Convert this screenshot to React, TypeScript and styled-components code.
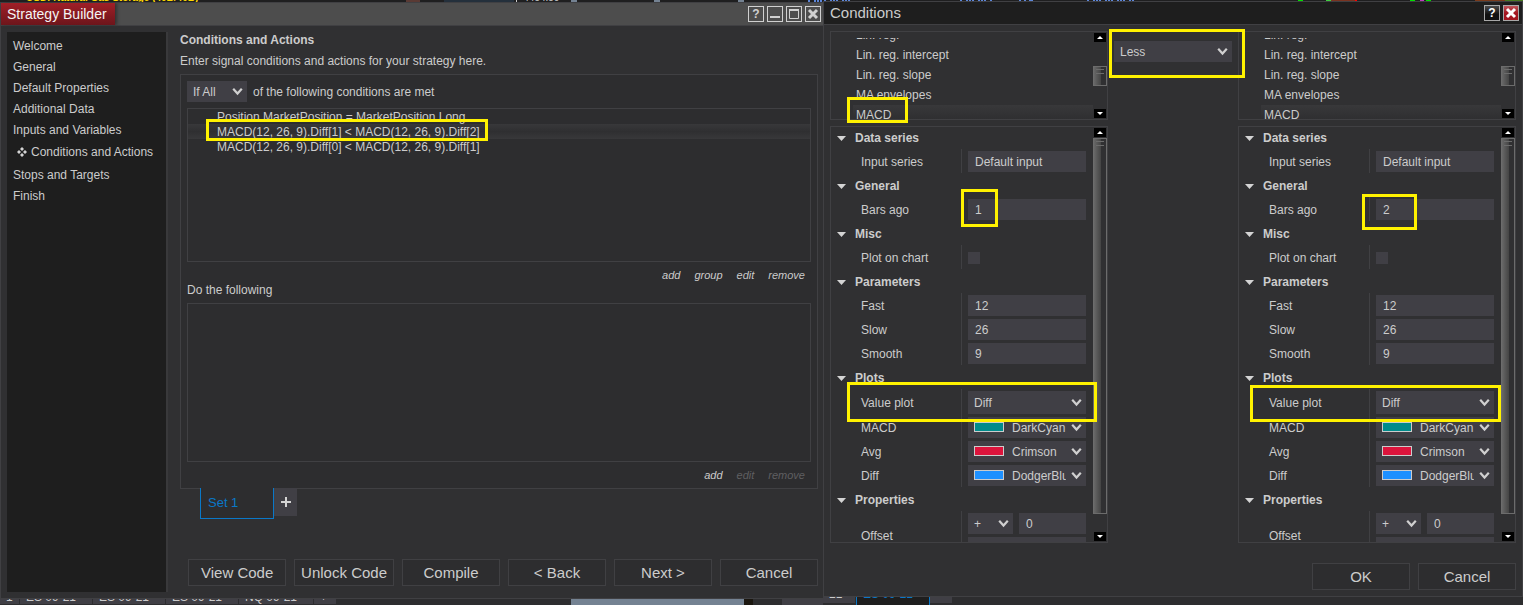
import React, { useId } from "react";
import styled, { createGlobalStyle, css } from "styled-components";

const c = {
  window: "#303032",
  panel: "#2d2d2f",
  dark: "#1e1e1e",
  line: "#404043",
  field: "#403f45",
  text: "#cccccc",
  dim: "#5f5f61",
  blue: "#0a78c8",
  mark: "#fff200",
};

const GlobalStyle = createGlobalStyle`
  *, *::before, *::after { box-sizing: border-box; }
  body {
    margin: 0;
    background: ${c.panel};
    color: ${c.text};
    font: 12px/14px "Liberation Sans", Arial, sans-serif;
  }
  button, input, select { font: inherit; color: inherit; margin: 0; border-radius: 0; }
  h1, h2, h3, p, ul { margin: 0; padding: 0; font: inherit; list-style: none; }
`;

const Desktop = styled.main`
  display: flex;
  min-height: 100vh;
`;

const Column = styled.div<{ $grow: number }>`
  display: flex;
  flex-direction: column;
  flex: ${(p) => p.$grow} 1 0;
  min-width: 0;
`;

const TopStrip = styled.div<{ $height: number }>`
  position: relative;
  display: flex;
  align-items: flex-end;
  height: ${(p) => p.$height}px;
  overflow: hidden;
  background: #1f1f20;
  line-height: 8px;
  font-size: 10px;
`;

const StripArt = styled.svg`
  position: absolute;
  inset: 0;
  width: 100%;
  height: 100%;
`;

const Headline = styled.span`
  margin-left: 26px;
  font-weight: bold;
  color: #ffd800;
  white-space: nowrap;
`;

const Quote = styled.span`
  margin-left: 325px;
`;

const BottomStrip = styled.div<{ $height: number }>`
  position: relative;
  display: flex;
  height: ${(p) => p.$height}px;
  overflow: hidden;
  background: ${c.panel};
`;

const ChartTab = styled.span<{ $width: number; $active?: boolean; $raised?: boolean }>`
  display: flex;
  align-items: flex-end;
  width: ${(p) => p.$width}px;
  height: 5px;
  padding: 0 0 0 6px;
  background: ${c.field};
  border-right: 1px solid ${c.panel};
  white-space: nowrap;
  ${(p) =>
    p.$raised &&
    css`
      height: 6px;
      padding-bottom: 2px;
    `}
  ${(p) =>
    p.$active &&
    css`
      height: 8px;
      padding-bottom: 4px;
      background: ${c.dark};
      color: ${c.blue};
      border: 0 solid ${c.blue};
      border-width: 0 1px;
    `}
`;

const Filler = styled.span<{ $width: number; $color?: string }>`
  width: ${(p) => p.$width}px;
  background: ${(p) => p.$color || "transparent"};
`;

const Window = styled.section<{ $dialog?: boolean }>`
  display: flex;
  flex-direction: column;
  flex: 1;
  border: 1px solid ${c.line};
  border-right-width: ${(p) => (p.$dialog ? 1 : 0)}px;
  background: ${c.window};
`;

const TitleBar = styled.header<{ $dialog?: boolean }>`
  display: flex;
  align-items: center;
  justify-content: space-between;
  height: 23px;
  padding-right: ${(p) => (p.$dialog ? 3 : 2)}px;
  border-bottom: 1px solid ${c.line};
  background: ${(p) => (p.$dialog ? c.dark : "#4d4d4d")};
`;

const TitleTag = styled.h1<{ $dialog?: boolean }>`
  padding: 0 8px 0 6px;
  font-size: ${(p) => (p.$dialog ? 15 : 14)}px;
  line-height: 22px;
  color: ${(p) => (p.$dialog ? c.text : "#f4f4f4")};
  ${(p) =>
    !p.$dialog &&
    css`
      background: linear-gradient(#a01f27, #6d151b);
      box-shadow: 2px 0 3px #333;
    `}
`;

const WindowButtons = styled.div`
  display: flex;
  gap: 3px;
`;

const WindowButton = styled.button<{ $tone?: "dark" | "red" }>`
  display: block;
  width: 16px;
  height: 16px;
  padding: 0;
  border: 1px solid ${(p) => (p.$tone ? "#a8a8a8" : "#d0d0d0")};
  background: ${(p) =>
    p.$tone === "red"
      ? "linear-gradient(#c0555b, #a3161f 50%)"
      : p.$tone === "dark"
        ? "linear-gradient(#4a4a4a, #111 60%)"
        : "transparent"};
  color: ${(p) => (p.$tone ? "#fff" : "#d0d0d0")};
  font-weight: bold;
  line-height: 14px;
  svg { display: block; }
`;

const BuilderBody = styled.div`
  display: flex;
  flex: 1;
  padding: 6px 5px 6px 6px;
`;

const Sidebar = styled.nav`
  width: 161px;
  padding: 3px 6px;
  background: ${c.dark};
  border-right: 2px solid #39393b;
`;

const Step = styled.a<{ $active?: boolean }>`
  display: flex;
  align-items: center;
  gap: 4px;
  height: ${(p) => (p.$active ? 24 : 21)}px;
  padding-left: ${(p) => (p.$active ? 4 : 0)}px;
  color: inherit;
  text-decoration: none;
  white-space: nowrap;
`;

const Content = styled.div`
  display: flex;
  flex-direction: column;
  flex: 1;
  min-width: 0;
  padding: 0 0 0 12px;
`;

const Heading = styled.h2`
  font-weight: bold;
  line-height: 16px;
`;

const Intro = styled.p`
  margin-top: 5px;
  line-height: 16px;
`;

const GroupBox = styled.div`
  margin-top: 5px;
  padding: 6px 6px 0;
  border: 1px solid ${c.line};
  background: ${c.panel};
`;

const MatchRow = styled.div`
  display: flex;
  align-items: center;
  gap: 6px;
`;

const ListBox = styled.ul<{ $height: number }>`
  position: relative;
  height: ${(p) => p.$height}px;
  border: 1px solid ${c.line};
`;

const ConditionList = styled(ListBox)`
  margin-top: 6px;
`;

const Condition = styled.li<{ $selected?: boolean }>`
  height: 15px;
  padding-left: 29px;
  line-height: 17px;
  background: ${(p) => (p.$selected ? "linear-gradient(#38383a, #2f2f31 50%, #38383a)" : "none")};
`;

const Links = styled.div`
  display: flex;
  justify-content: flex-end;
  gap: 14px;
  height: 26px;
  padding-right: 6px;
`;

const LinkButton = styled.button`
  padding: 0;
  border: 0;
  background: none;
  font-size: 11px;
  font-style: italic;
  &:disabled { color: ${c.dim}; }
`;

const SectionLabel = styled.h3`
  height: 15px;
  line-height: 5px;
`;

const SetTabs = styled.div`
  display: flex;
  align-items: flex-start;
  margin: -1px 0 0 20px;
`;

const SetTab = styled.button`
  width: 74px;
  height: 31px;
  padding: 0 0 0 7px;
  border: 1px solid ${c.blue};
  border-top: 0;
  background: ${c.panel};
  color: ${c.blue};
  font-size: 13px;
  text-align: left;
`;

const AddTab = styled.button`
  display: grid;
  place-items: center;
  width: 23px;
  height: 28px;
  padding: 0;
  border: 0;
  background: ${c.field};
`;

const Footer = styled.footer<{ $dialog?: boolean }>`
  display: flex;
  justify-content: flex-end;
  gap: 8px;
  margin-top: auto;
  padding-bottom: ${(p) => (p.$dialog ? 0 : 6)}px;
`;

const PushButton = styled.button`
  min-width: 98px;
  height: 27px;
  padding: 0 6px;
  border: 1px solid ${c.line};
  background: ${c.panel};
  font-size: 15px;
  white-space: nowrap;
`;

const DialogBody = styled.div`
  display: flex;
  flex-direction: column;
  flex: 1;
  padding: 6px;
`;

const Operands = styled.div`
  display: grid;
  grid-template-columns: 1fr 130px 1fr;
`;

const OperandColumn = styled.div`
  display: flex;
  flex-direction: column;
  gap: 6px;
  min-width: 0;
`;

const OperatorColumn = styled.div`
  position: relative;
  padding: 10px 6px;
`;

const Panel = styled.div<{ $height: number }>`
  position: relative;
  display: flex;
  height: ${(p) => p.$height}px;
  border: 1px solid ${c.line};
`;

const IndicatorClip = styled.ul`
  display: flex;
  flex-direction: column;
  justify-content: flex-end;
  flex: 1;
  margin-top: 6px;
  padding-left: 22px;
  overflow: hidden;
`;

const Indicator = styled.li<{ $selected?: boolean }>`
  flex: none;
  height: ${(p) => (p.$selected ? 14 : 20)}px;
  padding-left: 3px;
  line-height: 20px;
  background: ${(p) => (p.$selected ? "linear-gradient(#38383a, #2f2f31)" : "none")};
`;

const PropertyClip = styled.div`
  display: flex;
  flex-direction: column;
  gap: 2px;
  flex: 1;
  min-width: 0;
  overflow: hidden;
`;

const GroupHeader = styled.h3`
  display: flex;
  align-items: center;
  gap: 9px;
  height: 22px;
  padding-left: 6px;
  font-weight: bold;
`;

const Property = styled.div`
  display: flex;
  align-items: stretch;
`;

const PropertyName = styled.label`
  display: flex;
  align-items: center;
  width: 130px;
  padding: 2px 0 0 30px;
`;

const PropertyValue = styled.div`
  display: flex;
  flex: 1;
  flex-wrap: wrap;
  align-items: center;
  gap: 3px 6px;
  min-width: 0;
  min-height: 24px;
  padding: 2px 7px 1px 6px;
  border-left: 1px solid ${c.line};
`;

const TextField = styled.input`
  flex: 1;
  min-width: 0;
  width: 60px;
  height: 21px;
  padding: 0 7px;
  border: 0;
  background: ${c.field};
`;

const WideField = styled(TextField)`
  flex: 1 0 100%;
`;

const Tick = styled.input`
  appearance: none;
  width: 12px;
  height: 12px;
  margin: 0;
  background: ${c.field};
`;

const SelectWrap = styled.span<{ $width?: number; $tall?: boolean }>`
  position: relative;
  display: flex;
  flex: ${(p) => (p.$width ? "none" : 1)};
  width: ${(p) => (p.$width ? `${p.$width}px` : "auto")};
  min-width: 0;
  height: ${(p) => (p.$tall ? 23 : 21)}px;
  background: ${c.field};
`;

const NativeSelect = styled.select<{ $swatch?: boolean }>`
  appearance: none;
  flex: 1;
  width: 100%;
  min-width: 0;
  padding: 0 ${(p) => (p.$swatch ? 20 : 7)}px 0 ${(p) => (p.$swatch ? 44 : 6)}px;
  border: 0;
  background: transparent;
  option { background: ${c.field}; }
`;

const SelectArrow = styled.svg`
  position: absolute;
  right: 4px;
  top: 50%;
  margin-top: -4px;
  pointer-events: none;
`;

const Swatch = styled.span<{ $color: string }>`
  position: absolute;
  left: 6px;
  top: 5px;
  width: 30px;
  height: 10px;
  border: 1px solid ${c.text};
  background: ${(p) => p.$color};
  pointer-events: none;
`;

const ScrollTrack = styled.div`
  position: relative;
  display: flex;
  flex-direction: column;
  justify-content: space-between;
  align-items: center;
  width: 14px;
  padding: 1px 0;
`;

const ScrollButton = styled.button`
  display: grid;
  place-items: center;
  width: 12px;
  height: 9px;
  padding: 0;
  border: 0;
  background: #000;
`;

const ScrollThumb = styled.span<{ $top: number; $height: number }>`
  position: absolute;
  left: 0;
  right: 0;
  top: ${(p) => p.$top}px;
  height: ${(p) => p.$height}px;
  border: 1px solid #6c6c6c;
  background: linear-gradient(90deg, #686868, #444 7px, #303032 7px);
  &::after {
    content: "";
    position: absolute;
    left: 2px;
    right: 2px;
    top: 2px;
    height: 5px;
    border: 1px solid #6c6c6c;
    border-width: 1px 0;
  }
`;

const Mark = styled.span<{ $x: number; $y: number; $w: number; $h: number }>`
  position: absolute;
  z-index: 1;
  left: ${(p) => p.$x}px;
  top: ${(p) => p.$y}px;
  width: ${(p) => p.$w}px;
  height: ${(p) => p.$h}px;
  border: 3px solid ${c.mark};
  pointer-events: none;
`;

type SelectProps = {
  id?: string;
  label?: string;
  value: string;
  width?: number;
  tall?: boolean;
  swatch?: string;
};

function Select({ id, label, value, width, tall, swatch }: SelectProps) {
  return (
    <SelectWrap $width={width} $tall={tall}>
      <NativeSelect id={id} aria-label={label} $swatch={!!swatch} defaultValue={value}>
        <option>{value}</option>
      </NativeSelect>
      {swatch && <Swatch $color={swatch} />}
      <SelectArrow width="11" height="8" viewBox="0 0 11 8" aria-hidden="true">
        <path d="M1.200 0.800 5.500 5.500 9.800 0.800" fill="none" stroke="#d0d0d0" strokeWidth="2.2" />
      </SelectArrow>
    </SelectWrap>
  );
}

function Scrollbar({ top, height }: { top: number; height: number }) {
  return (
    <ScrollTrack>
      <ScrollButton aria-label="Scroll up">
        <svg width="6" height="3" viewBox="0 0 6 3"><path d="M0 3 3 0 6 3Z" fill="#fff" /></svg>
      </ScrollButton>
      <ScrollThumb $top={top} $height={height} />
      <ScrollButton aria-label="Scroll down">
        <svg width="6" height="3" viewBox="0 0 6 3"><path d="M0 0H6L3 3Z" fill="#fff" /></svg>
      </ScrollButton>
    </ScrollTrack>
  );
}

function Group({ title, children }: { title: string; children: React.ReactNode }) {
  return (
    <section>
      <GroupHeader>
        <svg width="9" height="5" viewBox="0 0 9 5" aria-hidden="true">
          <path d="M0 0H9L4.500 5Z" fill="#d4d4d4" />
        </svg>
        {title}
      </GroupHeader>
      {children}
    </section>
  );
}

function Row({ name, children }: { name: string; children: (id: string) => React.ReactNode }) {
  const id = useId();
  return (
    <Property>
      <PropertyName htmlFor={id}>{name}</PropertyName>
      <PropertyValue>{children(id)}</PropertyValue>
    </Property>
  );
}

type Box = [number, number, number, number];

function Operand({ barsAgo, marks, nameMark }: { barsAgo: string; marks: Box[]; nameMark?: Box }) {
  return (
    <OperandColumn>
      <Panel $height={89}>
        <IndicatorClip>
          {["Lin. reg.", "Lin. reg. intercept", "Lin. reg. slope", "MA envelopes"].map((name) => (
            <Indicator key={name}>{name}</Indicator>
          ))}
          <Indicator $selected>MACD</Indicator>
        </IndicatorClip>
        <Scrollbar top={34} height={20} />
        {nameMark && <Mark $x={nameMark[0]} $y={nameMark[1]} $w={nameMark[2]} $h={nameMark[3]} />}
      </Panel>
      <Panel $height={417}>
        <PropertyClip>
          <Group title="Data series">
            <Row name="Input series">{(id) => <TextField id={id} defaultValue="Default input" />}</Row>
          </Group>
          <Group title="General">
            <Row name="Bars ago">{(id) => <TextField id={id} defaultValue={barsAgo} />}</Row>
          </Group>
          <Group title="Misc">
            <Row name="Plot on chart">{(id) => <Tick id={id} type="checkbox" />}</Row>
          </Group>
          <Group title="Parameters">
            <Row name="Fast">{(id) => <TextField id={id} defaultValue="12" />}</Row>
            <Row name="Slow">{(id) => <TextField id={id} defaultValue="26" />}</Row>
            <Row name="Smooth">{(id) => <TextField id={id} defaultValue="9" />}</Row>
          </Group>
          <Group title="Plots">
            <Row name="Value plot">{(id) => <Select id={id} value="Diff" tall />}</Row>
            <Row name="MACD">{(id) => <Select id={id} value="DarkCyan" swatch="#008b8b" />}</Row>
            <Row name="Avg">{(id) => <Select id={id} value="Crimson" swatch="#dc143c" />}</Row>
            <Row name="Diff">{(id) => <Select id={id} value="DodgerBlue" swatch="#1e90ff" />}</Row>
          </Group>
          <Group title="Properties">
            <Row name="Offset">
              {(id) => (
                <>
                  <Select label="Offset sign" value="+" width={45} />
                  <TextField id={id} defaultValue="0" />
                  <WideField aria-label="Offset type" />
                </>
              )}
            </Row>
          </Group>
        </PropertyClip>
        <Scrollbar top={11} height={376} />
        {marks.map(([x, y, w, h]) => (
          <Mark key={y} $x={x} $y={y} $w={w} $h={h} />
        ))}
      </Panel>
    </OperandColumn>
  );
}

function CloseIcon() {
  return (
    <svg width="14" height="14" viewBox="0 0 14 14" aria-hidden="true">
      <path d="M3 3 11 11M11 3 3 11" stroke="currentColor" strokeWidth="3" />
    </svg>
  );
}

function Bars({ from, seed, count, color }: { from: number; seed: number; count: number; color: string }) {
  return (
    <>
      {Array.from({ length: count }, (_, i) => (
        <rect key={i} x={from + i * 4 + ((i * seed) % 3)} y="0" width="2" height="2" fill={color} />
      ))}
    </>
  );
}

const steps = [
  "Welcome",
  "General",
  "Default Properties",
  "Additional Data",
  "Inputs and Variables",
  "Conditions and Actions",
  "Stops and Targets",
  "Finish",
];

export default function App() {
  return (
    <>
      <GlobalStyle />
      <Desktop>
        <Column $grow={823}>
          <TopStrip $height={2}>
            <StripArt viewBox="0 0 823 2" preserveAspectRatio="none" aria-hidden="true">
              <rect x="406" width="14" height="2" fill="#5a3a34" />
              <rect x="444" width="70" height="2" fill="#24303c" />
              <rect x="516" width="1" height="2" fill="#ccc" />
              <rect x="571" width="6" height="2" fill="#748292" />
              <rect x="654" width="6" height="2" fill="#748292" />
              <rect x="738" width="6" height="2" fill="#748292" />
              <Bars from={808} seed={2} count={4} color="#5d86d8" />
            </StripArt>
            <Headline>USD: Natural Gas Storage (40B/40B)</Headline>
            <Quote>4454.50</Quote>
          </TopStrip>
          <Window>
            <TitleBar>
              <TitleTag>Strategy Builder</TitleTag>
              <WindowButtons>
                <WindowButton aria-label="Help">?</WindowButton>
                <WindowButton aria-label="Minimize">
                  <svg width="14" height="14" viewBox="0 0 14 14"><path d="M2 9H12V11H2Z" fill="currentColor" /></svg>
                </WindowButton>
                <WindowButton aria-label="Maximize">
                  <svg width="14" height="14" viewBox="0 0 14 14">
                    <path d="M2.500 3V11.500H11.500V3" fill="none" stroke="currentColor" />
                    <path d="M2 2H12V4H2Z" fill="currentColor" />
                  </svg>
                </WindowButton>
                <WindowButton aria-label="Close"><CloseIcon /></WindowButton>
              </WindowButtons>
            </TitleBar>
            <BuilderBody>
              <Sidebar>
                {steps.map((name) => {
                  const active = name === "Conditions and Actions";
                  return (
                    <Step key={name} href="#" $active={active}>
                      {active && (
                        <svg width="10" height="10" viewBox="0 0 10 10" aria-hidden="true">
                          <path
                            d="M5 0 7 2 5 4 3 2ZM5 6 7 8 5 10 3 8ZM2 3 4 5 2 7 0 5ZM8 3 10 5 8 7 6 5Z"
                            fill="#d4d4d4"
                          />
                        </svg>
                      )}
                      {name}
                    </Step>
                  );
                })}
              </Sidebar>
              <Content>
                <Heading>Conditions and Actions</Heading>
                <Intro>Enter signal conditions and actions for your strategy here.</Intro>
                <GroupBox>
                  <MatchRow>
                    <Select label="Match mode" value="If All" width={60} />
                    of the following conditions are met
                  </MatchRow>
                  <ConditionList $height={154}>
                    <Condition>Position.MarketPosition = MarketPosition.Long</Condition>
                    <Condition $selected>MACD(12, 26, 9).Diff[1] &lt; MACD(12, 26, 9).Diff[2]</Condition>
                    <Condition>MACD(12, 26, 9).Diff[0] &lt; MACD(12, 26, 9).Diff[1]</Condition>
                    <Mark as="li" $x={18} $y={10} $w={282} $h={22} />
                  </ConditionList>
                  <Links>
                    <LinkButton>add</LinkButton>
                    <LinkButton>group</LinkButton>
                    <LinkButton>edit</LinkButton>
                    <LinkButton>remove</LinkButton>
                  </Links>
                  <SectionLabel>Do the following</SectionLabel>
                  <ListBox $height={159} />
                  <Links>
                    <LinkButton>add</LinkButton>
                    <LinkButton disabled>edit</LinkButton>
                    <LinkButton disabled>remove</LinkButton>
                  </Links>
                </GroupBox>
                <SetTabs>
                  <SetTab>Set 1</SetTab>
                  <AddTab aria-label="Add set">
                    <svg width="10" height="10" viewBox="0 0 10 10"><path d="M4 0H6V4H10V6H6V10H4V6H0V4H4Z" fill="#d4d4d4" /></svg>
                  </AddTab>
                </SetTabs>
                <Footer>
                  {["View Code", "Unlock Code", "Compile", "< Back", "Next >", "Cancel"].map((label) => (
                    <PushButton key={label}>{label}</PushButton>
                  ))}
                </Footer>
              </Content>
            </BuilderBody>
          </Window>
          <BottomStrip $height={6}>
            <ChartTab $width={20}>1</ChartTab>
            <ChartTab $width={73}>ES 09-21</ChartTab>
            <ChartTab $width={73}>ES 09-21</ChartTab>
            <ChartTab $width={73}>ES 09-21</ChartTab>
            <ChartTab $width={75}>NQ 09-21</ChartTab>
            <ChartTab $width={23}>+</ChartTab>
            <Filler $width={234} />
            <Filler $width={173} $color="#748292" />
            <Filler $width={9} $color="#1b1710" />
            <Filler $width={29} />
            <Filler $width={41} $color={c.field} />
          </BottomStrip>
        </Column>
        <Column $grow={700}>
          <TopStrip $height={1}>
            <StripArt viewBox="0 0 700 1" preserveAspectRatio="none" aria-hidden="true">
              <Bars from={1} seed={2} count={7} color="#5d86d8" />
              <Bars from={137} seed={2} count={8} color="#5d86d8" />
              <Bars from={196} seed={1} count={4} color="#5d86d8" />
              <Bars from={264} seed={2} count={12} color="#5d86d8" />
              <rect x="475" width="5" height="1" fill="#00e000" />
              <rect x="503" width="5" height="1" fill="#40d040" />
              <rect x="508" width="24" height="1" fill="#7a3320" />
              <rect x="532" width="2" height="1" fill="#f00" />
              <rect x="587" width="5" height="1" fill="#00e000" />
              <rect x="597" width="4" height="1" fill="#c03cc0" />
              <rect x="603" width="5" height="1" fill="#00e000" />
              <rect x="652" width="30" height="1" fill="#7a3a1a" />
              <rect x="682" width="18" height="1" fill="#4a7a20" />
            </StripArt>
          </TopStrip>
          <Window $dialog>
            <TitleBar $dialog>
              <TitleTag $dialog>Conditions</TitleTag>
              <WindowButtons>
                <WindowButton $tone="dark" aria-label="Help">?</WindowButton>
                <WindowButton $tone="red" aria-label="Close"><CloseIcon /></WindowButton>
              </WindowButtons>
            </TitleBar>
            <DialogBody>
              <Operands>
                <Operand barsAgo="1" nameMark={[16, 65, 61, 26]} marks={[[130, 62, 37, 38], [16, 255, 250, 40]]} />
                <OperatorColumn>
                  <Select label="Comparison" value="Less" />
                  <Mark $x={1} $y={-2} $w={136} $h={49} />
                </OperatorColumn>
                <Operand barsAgo="2" marks={[[123, 67, 55, 36], [11, 258, 251, 37]]} />
              </Operands>
              <Footer $dialog>
                <PushButton>OK</PushButton>
                <PushButton>Cancel</PushButton>
              </Footer>
            </DialogBody>
          </Window>
          <BottomStrip $height={8}>
            <ChartTab $width={33} $raised>21</ChartTab>
            <ChartTab $width={74} $active>ES 09-21</ChartTab>
            <ChartTab $width={23} $raised>+</ChartTab>
          </BottomStrip>
        </Column>
      </Desktop>
    </>
  );
}
